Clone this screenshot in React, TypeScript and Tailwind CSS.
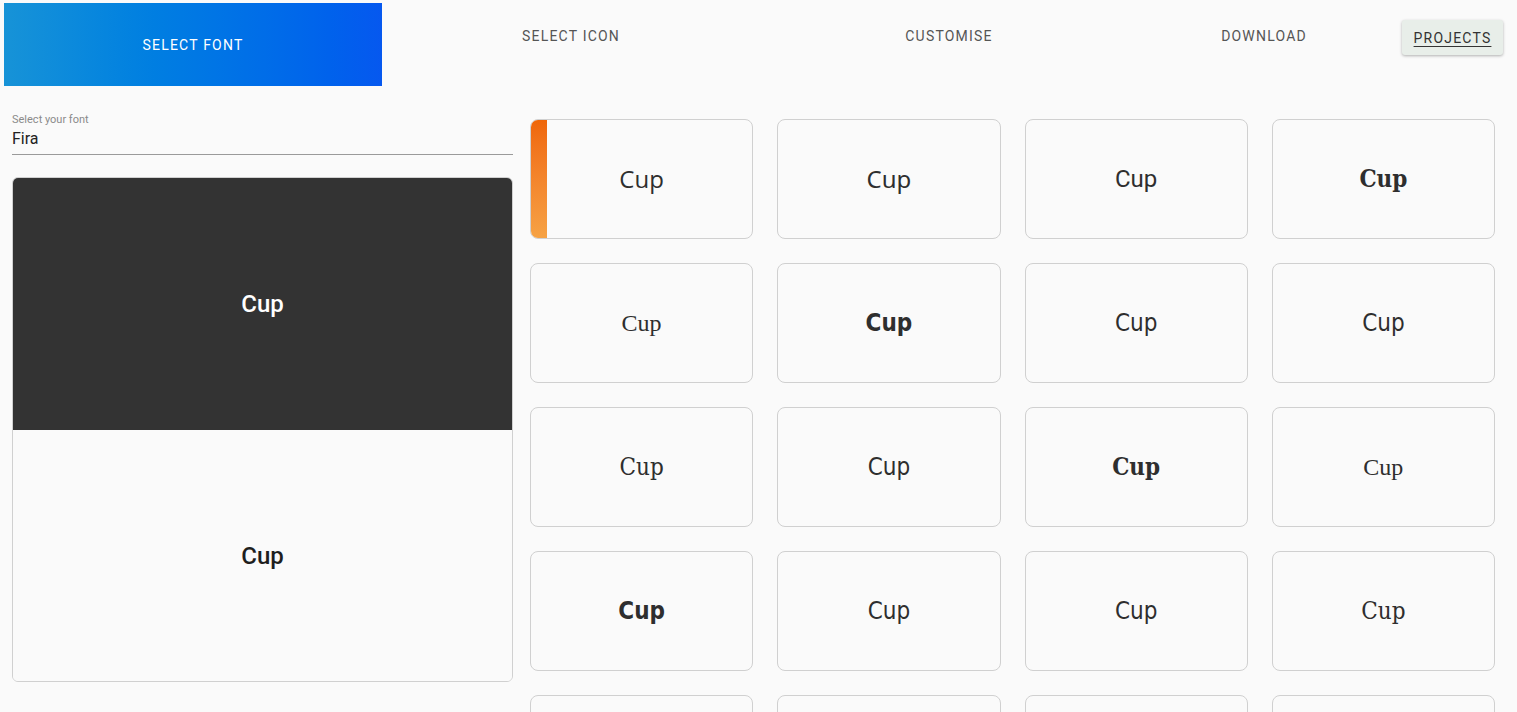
import React from "react";

const TABS = [
  { label: "SELECT ICON", w: "w-[378px]" },
  { label: "CUSTOMISE", w: "w-[378px]" },
  { label: "DOWNLOAD", w: "w-[252px]" },
];

// one font per preview card, read off the screenshot
const CARDS = [
  "font-['Open_Sans',sans-serif] font-medium",
  "font-['Noto_Sans',sans-serif]",
  "font-['Roboto',sans-serif]",
  "font-['DejaVu_Serif',serif] font-bold [font-stretch:condensed]",
  "font-['Liberation_Serif',serif]",
  "font-['DejaVu_Sans',sans-serif] font-bold [font-stretch:condensed]",
  "font-['DejaVu_Sans',sans-serif] [font-stretch:condensed]",
  "font-['Liberation_Sans_Narrow','DejaVu_Sans',sans-serif] [font-stretch:condensed]",
  "font-['DejaVu_Serif',serif] [font-stretch:condensed]",
  "font-['DejaVu_Sans',sans-serif] [font-stretch:condensed]",
  "font-['DejaVu_Serif',serif] font-bold [font-stretch:condensed]",
  "font-['Liberation_Serif',serif]",
  "font-['DejaVu_Sans',sans-serif] font-bold [font-stretch:condensed]",
  "font-['DejaVu_Sans',sans-serif] [font-stretch:condensed]",
  "font-['Liberation_Sans_Narrow','DejaVu_Sans',sans-serif] [font-stretch:condensed]",
  "font-['DejaVu_Serif',serif] [font-stretch:condensed]",
];

function Card({ font, active }: { font?: string; active?: boolean }) {
  return (
    <div className="relative flex h-[120px] items-center justify-center overflow-hidden rounded-[8px] border border-[#d0d0d0] bg-[#fafafa]">
      {active && (
        <div className="absolute inset-y-0 left-0 w-[16px] bg-gradient-to-b from-[#ef6608] to-[#f6a244]" />
      )}
      {font && (
        <span className={`text-[24px] leading-none text-[#2e2e2e] ${font}`}>
          Cup
        </span>
      )}
    </div>
  );
}

export default function App() {
  return (
    <div className="h-[712px] overflow-hidden bg-[#fafafa] font-['Roboto',sans-serif]">
      <header className="flex items-start pl-[4px] pt-[3px]">
        <div className="flex h-[83px] w-[378px] items-center justify-center bg-gradient-to-r from-[#1793d7] to-[#0658ef] pt-[2px] text-[14px] tracking-[1.2px] text-white">
          SELECT FONT
        </div>
        {TABS.map((t) => (
          <div
            key={t.label}
            className={`flex h-[66px] ${t.w} items-center justify-center text-[14px] tracking-[1.2px] text-[#555]`}
          >
            {t.label}
          </div>
        ))}
        <button
          type="button"
          className="ml-[12px] mt-[17px] h-[35px] w-[101px] rounded-[3px] bg-[#e8eee9] pt-[2px] text-[14px] tracking-[1.2px] text-[#333] underline underline-offset-[3px] shadow-[0_1px_3px_rgba(0,0,0,0.3)]"
        >
          PROJECTS
        </button>
      </header>

      <main className="flex gap-[17px] px-[12px]">
        <section className="w-[501px] shrink-0 pt-[27px]">
          <div className="text-[11px] leading-[13px] text-[#8a8a8a]">
            Select your font
          </div>
          <div className="mt-[3px] border-b border-[#9a9a9a] pb-[5px] text-[16px] leading-[20px] text-[#222]">
            Fira
          </div>
          <div className="mt-[22px] overflow-hidden rounded-[6px] border border-[#d0d0d0]">
            <div className="flex h-[252px] items-center justify-center bg-[#333333] text-[24px] font-medium text-white">
              Cup
            </div>
            <div className="flex h-[251px] items-center justify-center bg-[#fafafa] text-[24px] font-medium text-[#1e1e1e]">
              Cup
            </div>
          </div>
        </section>

        <section className="grid w-[965px] grid-cols-4 gap-x-[24px] gap-y-[24px] pt-[33px]">
          {CARDS.map((f, i) => (
            <Card key={i} font={f} active={i === 0} />
          ))}
          <Card />
          <Card />
          <Card />
          <Card />
        </section>
      </main>
    </div>
  );
}
